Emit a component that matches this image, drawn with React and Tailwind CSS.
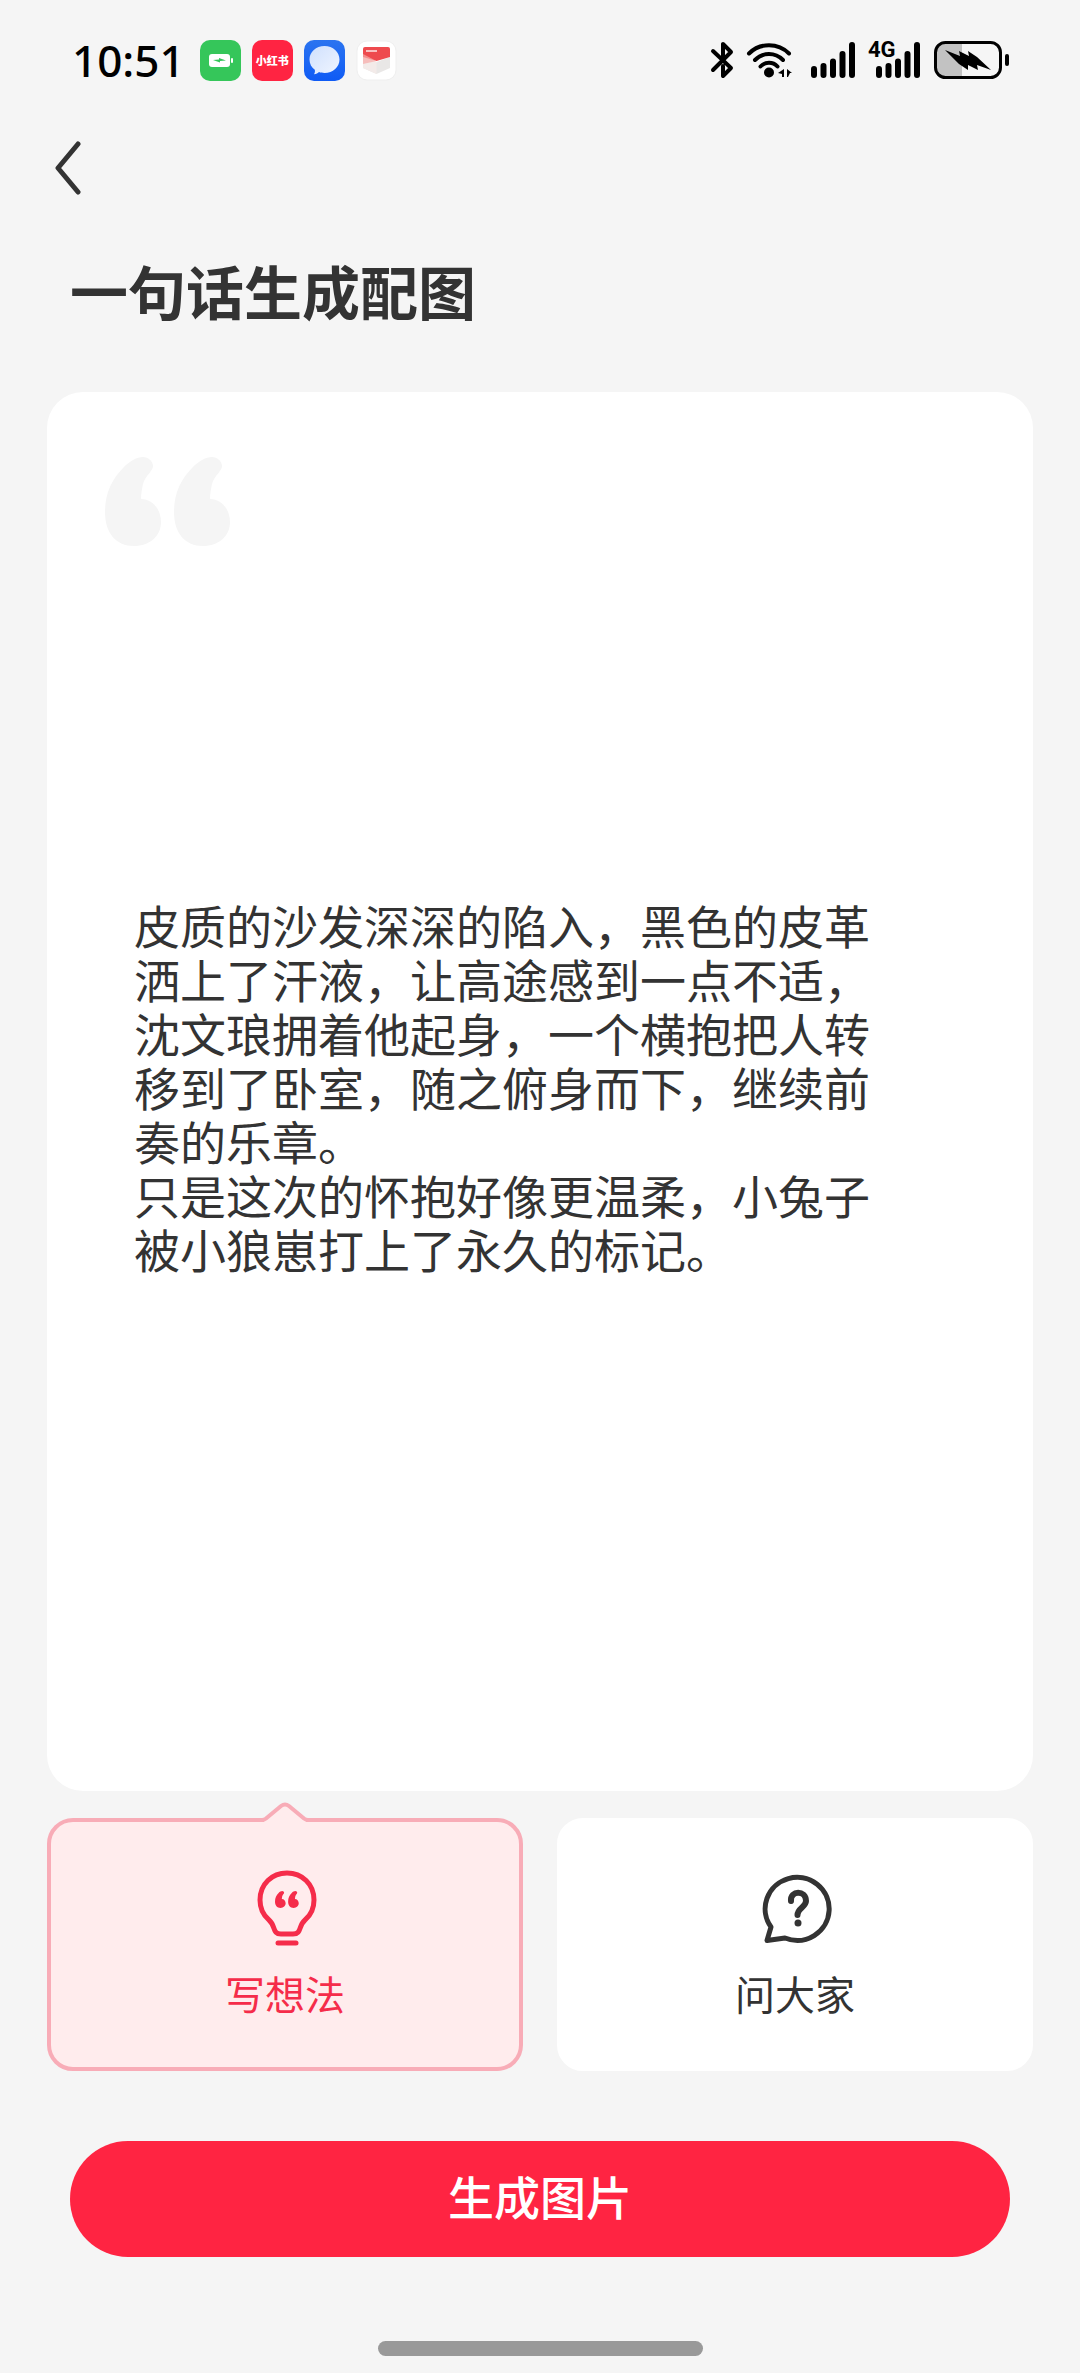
import React, { useState } from 'react';

const INITIAL_TEXT =
    '皮质的沙发深深的陷入，黑色的皮革洒上了汗液，让高途感到一点不适，沈文琅拥着他起身，一个横抱把人转移到了卧室，随之俯身而下，继续前奏的乐章。\n只是这次的怀抱好像更温柔，小兔子被小狼崽打上了永久的标记。';

const QUOTE_PATH =
    'M38 0C43 0 48 4 48 9C48 14 40 19 38 27C37 32 36 37 36 42C47 42 56 52 56 65C56 79 45 89 29 89C11 89 0 76 0 55C0 36 7 22 19 10C25 4 32 0 38 0Z';

const QuoteMark = ({ className }) => (
    <svg viewBox="0 0 125 89" className={className} fill="currentColor" aria-hidden="true">
        <path d={QUOTE_PATH} />
        <path d={QUOTE_PATH} transform="translate(69 0)" />
    </svg>
);

const BatteryAppIcon = () => (
    <svg viewBox="0 0 41 41" className="size-[41px]" aria-hidden="true">
        <rect width="41" height="41" rx="10" fill="#35c65a" />
        <rect x="9" y="14" width="21" height="13" rx="3" fill="#fff" />
        <rect x="31" y="18" width="2" height="5" rx="1" fill="#fff" />
        <path d="M13 20l6-.5 0-1.500 7 2.500-6 .5 0 1.500z" fill="#35c65a" />
    </svg>
);

const MessageAppIcon = () => (
    <svg viewBox="0 0 41 41" className="size-[41px]" aria-hidden="true">
        <defs>
            <linearGradient id="msg-bg" x1="0" y1="0" x2="0" y2="1">
                <stop offset="0" stopColor="#2b74f0" />
                <stop offset="1" stopColor="#0f5bf5" />
            </linearGradient>
            <linearGradient id="msg-bubble" x1="0" y1="0" x2="1" y2="1">
                <stop offset="0" stopColor="#cfe0fd" />
                <stop offset="1" stopColor="#f0f5ff" />
            </linearGradient>
        </defs>
        <rect width="41" height="41" rx="10" fill="url(#msg-bg)" />
        <path
            d="M20.500 6C29 6 35.500 12 35.500 19.500S29 33 20.500 33c-2 0-4-.3-5.500-.9-1 1.200-2.800 2-5 2.200.8-1.300 1.200-2.800.8-4.500C7.500 27.500 5.500 23.800 5.500 19.500 5.500 12 12 6 20.500 6z"
            fill="url(#msg-bubble)"
        />
    </svg>
);

const MailAppIcon = () => (
    <svg viewBox="0 0 41 41" className="size-[41px]" aria-hidden="true">
        <rect x="1" y="1" width="39" height="39" rx="10" fill="#fff" stroke="#efefef" />
        <path d="M7 17l13.500 5L34 17v11l-13.500 6L7 28z" fill="#e9e7e6" />
        <path d="M7 17l13.500 5v12L7 28z" fill="#f3ebe9" />
        <path d="M7 9q0-2 2-2h23q2 0 2 2v8l-13.500 4L7 17z" fill="#ee4a4e" />
        <path d="M7 14l13.500 7L7 24z" fill="#f6a9a6" opacity=".7" />
        <path d="M10 11h11" stroke="#f9c0c0" strokeWidth="2" />
    </svg>
);

const BluetoothIcon = () => (
    <svg viewBox="0 0 24 38" className="h-[38px] w-6" fill="none" stroke="#000" strokeWidth="4" strokeLinecap="round" strokeLinejoin="round" aria-hidden="true">
        <path d="M3 10l18 17-8 8V25M3 29L21 11l-8-8v13" />
    </svg>
);

const WifiIcon = () => (
    <svg viewBox="0 0 48 38" className="h-[38px] w-12" fill="none" stroke="#000" strokeWidth="4" strokeLinecap="round" aria-hidden="true">
        <path d="M3 12.500C14 1.500 32 1.500 43 12.500" />
        <path d="M9 19C17 11 29 11 37 19" />
        <path d="M14.500 25.500C19 20.500 27 20.500 31.500 25.500" />
        <circle cx="23" cy="31.500" r="5" fill="#000" stroke="none" />
        <path d="M38 28v8h-2v-3l-4-1zM41 28l5 4h-2l-2 4h-1z" fill="#000" stroke="none" />
    </svg>
);

const SignalIcon = () => (
    <svg viewBox="0 0 44 36" className="h-9 w-11" stroke="#000" strokeWidth="6" strokeLinecap="round" aria-hidden="true">
        <path d="M3 27v6M12.500 24v9M22 19.500V33M31.500 12v21M41 3v30" />
    </svg>
);

const BatteryIcon = () => (
    <svg viewBox="0 0 76 38" className="h-[38px] w-[76px]" aria-hidden="true">
        <path d="M11 2H28V36H11Q2 36 2 27V11Q2 2 11 2Z" fill="#c2c2c2" />
        <rect x="1.500" y="1.500" width="65" height="35" rx="10" fill="none" stroke="#000" strokeWidth="3" />
        <rect x="71" y="13" width="4" height="12" rx="2" fill="#000" />
        <path d="M11 9l15 6-1-5 10 5-1-5 9 6 14 13-14-5 1 5-10-5 0 5-9-6z" fill="#000" />
    </svg>
);

const BulbIcon = () => (
    <svg viewBox="-2 0 60 76" className="h-[76px] w-[60px]" fill="none" stroke="currentColor" strokeWidth="5" strokeLinecap="round" strokeLinejoin="round" overflow="visible" aria-hidden="true">
        <path d="M12 50C6 45 3 39 3 30C3 14 15 3 30 3S57 14 57 30C57 39 54 45 48 50C41 56 45 64 36 64H24C15 64 19 56 12 50Z" />
        <path d="M21 73H39" />
        <g fill="currentColor" stroke="none" transform="translate(18 21) scale(.19)">
            <path d={QUOTE_PATH} />
            <path d={QUOTE_PATH} transform="translate(69 0)" />
        </g>
    </svg>
);

const QuestionIcon = () => (
    <svg viewBox="-2 -1 72 76" className="h-[76px] w-[72px]" fill="none" stroke="currentColor" strokeLinecap="round" strokeLinejoin="round" overflow="visible" aria-hidden="true">
        <path strokeWidth="5" d="M10 56A32 31.500 0 1 1 24 67L6 69.500Z" />
        <path strokeWidth="6" d="M30 30C29 19 45 19 45 30C45 36 36.500 37 36.500 44" />
        <circle cx="37" cy="52" r="3.500" fill="currentColor" stroke="none" />
    </svg>
);

const StatusBar = () => (
    <div className="flex h-[120px] items-center justify-between pl-[72px] pr-[70px] text-black">
        <div className="flex items-center gap-[11px]">
            <span className="mr-1 font-['Noto_Sans',sans-serif] text-[44px] font-medium leading-none">10:51</span>
            <BatteryAppIcon />
            <span className="flex size-[41px] items-center justify-center rounded-[10px] bg-[#ff2442] text-[11px] font-black leading-none text-white">
                小红书
            </span>
            <MessageAppIcon />
            <MailAppIcon />
        </div>
        <div className="flex items-center">
            <BluetoothIcon />
            <div className="ml-3">
                <WifiIcon />
            </div>
            <div className="ml-[17px]">
                <SignalIcon />
            </div>
            <div className="relative ml-[21px]">
                <SignalIcon />
                <span className="absolute -left-2 -top-1 font-['Roboto',sans-serif] text-[22px] font-bold leading-6">4G</span>
            </div>
            <div className="ml-[14px]">
                <BatteryIcon />
            </div>
        </div>
    </div>
);

const ModeButton = ({ label, icon, isActive, onSelect }) => (
    <button
        type="button"
        aria-pressed={isActive}
        onClick={onSelect}
        className={
            isActive
                ? 'relative flex flex-1 flex-col items-center gap-4 rounded-[26px] border-4 border-[#f8acb7] bg-[#ffeced] pb-[42px] pt-12 text-[#f52c4a]'
                : 'relative flex flex-1 flex-col items-center gap-4 rounded-[26px] border-4 border-white bg-white pb-[42px] pt-12 text-[#333333]'
        }
    >
        {isActive && (
            <svg viewBox="0 0 60 24" className="absolute -top-[21px] left-1/2 h-6 w-[60px] -translate-x-1/2" aria-hidden="true">
                <path d="M9 19L26 5Q30 2 34 5L51 19V24H9Z" fill="#ffeced" />
                <path d="M0 19H7Q9 19 11 17.500L26 5Q30 2 34 5L49 17.500Q51 19 53 19H60" fill="none" stroke="#f8acb7" strokeWidth="4" />
            </svg>
        )}
        {icon}
        <span className="text-[40px] leading-[63px]">{label}</span>
    </button>
);

export default function App() {
    const [text, setText] = useState(INITIAL_TEXT);
    const [mode, setMode] = useState('idea');

    return (
        <div className="flex min-h-screen flex-col bg-[#f5f5f5] font-['Noto_Sans_CJK_SC',sans-serif] text-[#333333]">
            <StatusBar />

            {/* Header */}
            <header>
                <button type="button" aria-label="返回" className="ml-[46px] flex h-24 w-12 items-center pl-2">
                    <svg viewBox="0 0 28 54" className="h-[54px] w-7" fill="none" stroke="currentColor" strokeWidth="5" strokeLinecap="round" strokeLinejoin="round">
                        <path d="M24 3L4 27L24 51" />
                    </svg>
                </button>
                <h1 className="px-[70px] pb-[60px] pt-8 text-[58px] font-bold leading-[84px]">一句话生成配图</h1>
            </header>

            <main className="flex flex-1 flex-col px-[47px]">
                {/* Editor card */}
                <section className="relative flex flex-1 items-center rounded-[36px] bg-white pb-3 pl-[87px] pr-[130px]">
                    <QuoteMark className="absolute left-[58px] top-[65px] w-[125px] text-[#f5f5f5]" />
                    <textarea
                        aria-label="一句话生成配图"
                        rows={7}
                        value={text}
                        onChange={(e) => setText(e.target.value)}
                        className="w-full resize-none overflow-hidden bg-transparent pr-3 text-[46px] leading-[54px] outline-none"
                    />
                </section>

                {/* Mode switch */}
                <div className="mt-[27px] flex gap-[34px]">
                    <ModeButton label="写想法" icon={<BulbIcon />} isActive={mode === 'idea'} onSelect={() => setMode('idea')} />
                    <ModeButton label="问大家" icon={<QuestionIcon />} isActive={mode === 'ask'} onSelect={() => setMode('ask')} />
                </div>
            </main>

            <footer className="flex flex-col items-center px-[70px] pb-[17px] pt-[70px]">
                <button type="button" className="h-[116px] w-full rounded-full bg-[#ff2442] pb-2 text-[46px] font-medium leading-none text-white">
                    生成图片
                </button>
                <div className="mt-[84px] h-[15px] w-[325px] rounded-full bg-[#999999]" />
            </footer>
        </div>
    );
}
